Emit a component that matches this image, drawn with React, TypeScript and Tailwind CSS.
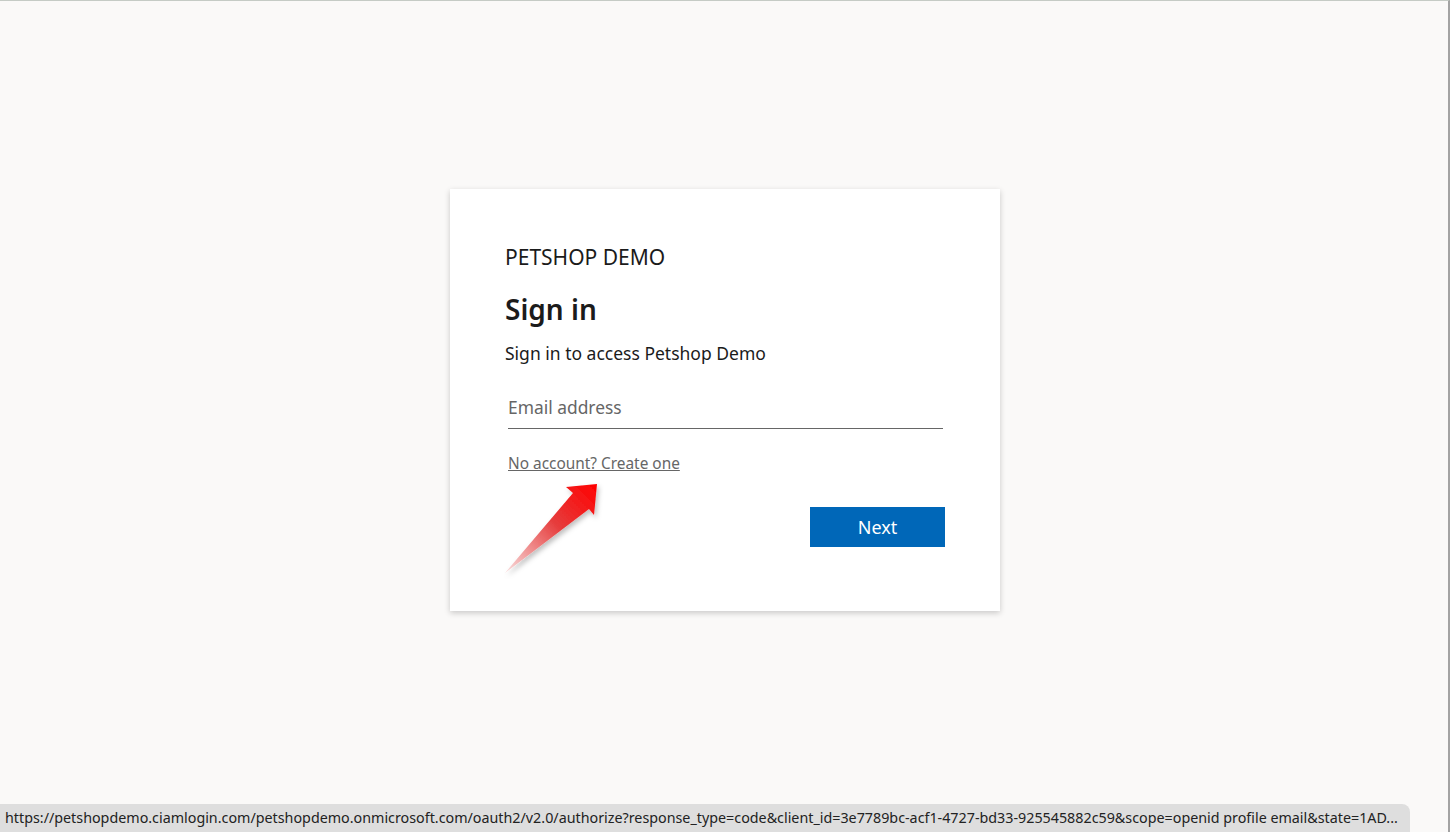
import React from 'react'

const font = { fontFamily: '"Segoe UI", "Noto Sans", sans-serif' }

function Arrow() {
  return (
    <svg
      className="pointer-events-none absolute left-0 top-0 h-[421px] w-[550px]"
      viewBox="0 0 550 421"
    >
      <defs>
        <linearGradient id="arrowFill" x1="147" y1="295" x2="56" y2="383" gradientUnits="userSpaceOnUse">
          <stop offset="0" stopColor="#ff0000" />
          <stop offset="0.45" stopColor="#e63c3c" />
          <stop offset="1" stopColor="#f8dcdc" />
        </linearGradient>
        <filter id="arrowShadow" x="-20%" y="-20%" width="140%" height="140%">
          <feDropShadow dx="2" dy="3" stdDeviation="2.5" floodColor="#000" floodOpacity="0.25" />
        </filter>
      </defs>
      <polygon
        points="147,295 116,298 123,304 55,384 139,320 144,326"
        fill="url(#arrowFill)"
        filter="url(#arrowShadow)"
      />
    </svg>
  )
}

export default function App() {
  return (
    <div
      className="relative flex h-[832px] w-full flex-col items-center overflow-hidden border-t border-r-2 border-t-[#c5cbc5] border-r-[#a3a3a3] bg-[#faf9f8] pt-[188px]"
      style={font}
    >
      <div className="relative ml-[2px] w-[550px] bg-white pb-[64px] pl-[55px] pr-[55px] pt-[54px] shadow-[0_2px_6px_rgba(0,0,0,0.2)]">
        <div className="text-[21px] leading-[28px] text-[#1b1b1b]">PETSHOP DEMO</div>
        <h1 className="mt-[20px] text-[28px] font-semibold leading-[36px] text-[#1b1b1b]">Sign in</h1>
        <p className="mt-[14px] text-[17.5px] leading-[24px] text-[#1b1b1b]">Sign in to access Petshop Demo</p>

        <div className="mt-[27px] pl-[3px] pr-[2px]">
          <input
            type="email"
            placeholder="Email address"
            className="h-[37px] w-full border-b border-[#666] bg-transparent px-0 pb-[6px] text-[17.4px] text-[#1b1b1b] outline-none placeholder:text-[#666]"
          />
        </div>

        <div className="mt-[24px] pl-[3px] leading-[20px]">
          <a href="#" className="text-[15.4px] leading-[20px] text-[#666] underline">
            No account? Create one
          </a>
        </div>

        <div className="mt-[33px] flex justify-end">
          <button className="h-[40px] w-[135px] bg-[#0067b8] text-[18px] text-white">Next</button>
        </div>

        <Arrow />
      </div>

      <div className="absolute bottom-0 left-0 flex h-[28px] w-[1410px] items-center whitespace-nowrap rounded-tr-[8px] bg-[#dedede] pl-[5px] text-[14.3px] text-[#222]">
        https://petshopdemo.ciamlogin.com/petshopdemo.onmicrosoft.com/oauth2/v2.0/authorize?response_type=code&amp;client_id=3e7789bc-acf1-4727-bd33-925545882c59&amp;scope=openid profile email&amp;state=1AD...
      </div>
    </div>
  )
}
